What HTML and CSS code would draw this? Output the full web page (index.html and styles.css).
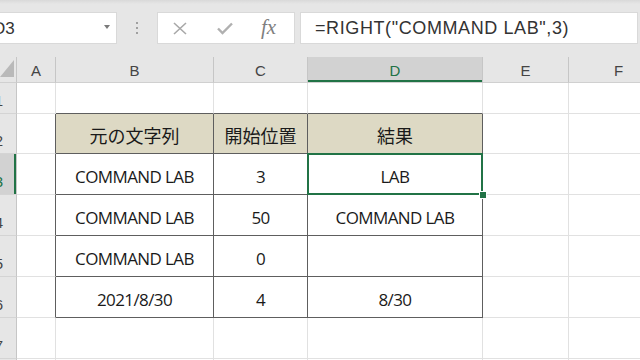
FILE: index.html
```html
<!DOCTYPE html>
<html lang="ja">
<head>
    <meta charset="UTF-8">
    <meta name="viewport" content="width=device-width, initial-scale=1.0">
    <title>RIGHT関数 - COMMAND LAB</title>
    <link rel="stylesheet" href="styles.css">
</head>
<body>
    <div class="toolbar">
        <div class="name-box">
            <span class="name-text">D3</span>
            <span class="name-arrow"></span>
        </div>
        <div class="grip">
            <span></span><span></span><span></span>
        </div>
        <div class="fx-buttons">
            <svg class="icon-cancel" width="14" height="13" viewBox="0 0 14 13">
                <path d="M1 1 L13 12 M13 1 L1 12" stroke="#a8a8a8" stroke-width="1.6" fill="none"/>
            </svg>
            <svg class="icon-enter" width="16" height="13" viewBox="0 0 16 13">
                <path d="M1 6.5 L5.5 11 L15 1.5" stroke="#b0b0b0" stroke-width="2.4" fill="none"/>
            </svg>
            <span class="icon-fx">fx</span>
        </div>
        <div class="formula">=RIGHT("COMMAND LAB",3)</div>
    </div>

    <div class="sheet">
        <!-- column headers -->
        <div class="corner">
            <svg width="17" height="26" viewBox="0 0 17 26">
                <polygon points="14,3 14,20 0,20" fill="#b9b9b9"/>
            </svg>
        </div>
        <div class="ch">A</div>
        <div class="ch">B</div>
        <div class="ch">C</div>
        <div class="ch ch-active">D</div>
        <div class="ch">E</div>
        <div class="ch">F</div>

        <!-- row 1 -->
        <div class="rh"><span>1</span></div>
        <div class="c"></div>
        <div class="c edge-b"></div>
        <div class="c edge-b"></div>
        <div class="c edge-b"></div>
        <div class="c"></div>
        <div class="c"></div>

        <!-- row 2 -->
        <div class="rh"><span>2</span></div>
        <div class="c edge-r"></div>
        <div class="c t head">元の文字列</div>
        <div class="c t head">開始位置</div>
        <div class="c t head">結果</div>
        <div class="c"></div>
        <div class="c"></div>

        <!-- row 3 -->
        <div class="rh rh-active"><span>3</span></div>
        <div class="c edge-r"></div>
        <div class="c t">COMMAND LAB</div>
        <div class="c t">3</div>
        <div class="c t selected">LAB<span class="fill-handle"></span></div>
        <div class="c"></div>
        <div class="c"></div>

        <!-- row 4 -->
        <div class="rh"><span>4</span></div>
        <div class="c edge-r"></div>
        <div class="c t">COMMAND LAB</div>
        <div class="c t">50</div>
        <div class="c t">COMMAND LAB</div>
        <div class="c"></div>
        <div class="c"></div>

        <!-- row 5 -->
        <div class="rh"><span>5</span></div>
        <div class="c edge-r"></div>
        <div class="c t">COMMAND LAB</div>
        <div class="c t">0</div>
        <div class="c t"></div>
        <div class="c"></div>
        <div class="c"></div>

        <!-- row 6 -->
        <div class="rh"><span>6</span></div>
        <div class="c edge-r"></div>
        <div class="c t">2021/8/30</div>
        <div class="c t">4</div>
        <div class="c t">8/30</div>
        <div class="c"></div>
        <div class="c"></div>

        <!-- row 7 -->
        <div class="rh"><span>7</span></div>
        <div class="c"></div>
        <div class="c"></div>
        <div class="c"></div>
        <div class="c"></div>
        <div class="c"></div>
        <div class="c"></div>

        <!-- row 8 -->
        <div class="rh"><span>8</span></div>
        <div class="c"></div>
        <div class="c"></div>
        <div class="c"></div>
        <div class="c"></div>
        <div class="c"></div>
        <div class="c"></div>
    </div>
</body>
</html>
```

FILE: styles.css
```css
* {
    box-sizing: border-box;
}
body {
    margin: 0;
    width: 640px;
    height: 360px;
    overflow: hidden;
    background-color: #e6e6e6;
    font-family: "Liberation Sans", Arial, sans-serif;
}
.toolbar {
    height: 57px;
    display: flex;
    align-items: flex-start;
    padding-top: 12px;
    background: linear-gradient(#d9d9d9 0, #e6e6e6 4px);
}
.name-box {
    width: 129px;
    height: 32px;
    margin-left: -12px;
    padding-left: 4px;
    background: white;
    border: 1px solid #d9d9d9;
    display: flex;
    align-items: center;
    justify-content: space-between;
    padding-right: 6px;
}
.name-text {
    font-size: 17px;
    color: #333;
    margin-top: 1px;
}
.name-arrow {
    width: 0;
    height: 0;
    border-left: 3.5px solid transparent;
    border-right: 3.5px solid transparent;
    border-top: 4px solid #7a7a7a;
    margin-top: -3px;
}
.grip {
    width: 40px;
    height: 32px;
    display: flex;
    flex-direction: column;
    align-items: center;
    justify-content: center;
    gap: 3px;
}
.grip span {
    width: 2px;
    height: 2px;
    background: #a0a0a0;
}
.fx-buttons {
    width: 138px;
    height: 32px;
    background: white;
    border: 1px solid #d9d9d9;
    display: flex;
    align-items: center;
    padding-left: 15px;
}
.icon-cancel {
    margin-top: 1px;
}
.icon-enter {
    margin-left: 30px;
    margin-top: 1px;
}
.icon-fx {
    margin-left: 28px;
    font-family: "Liberation Serif", "Times New Roman", serif;
    font-style: italic;
    font-size: 21px;
    color: #7f7f7f;
    margin-top: -2px;
}
.formula {
    flex: 1;
    height: 32px;
    margin-left: 5px;
    margin-right: 2px;
    background: white;
    border: 1px solid #d9d9d9;
    padding-left: 14px;
    font-size: 18px;
    letter-spacing: 0.6px;
    color: #333;
    line-height: 30px;
}
.sheet {
    display: grid;
    grid-template-columns: 17px 39px 158px 94px 175px 86px 100px;
    grid-template-rows: 26px 31px 40px repeat(6, 41px);
    width: 669px;
    background: white;
}
.sheet > div {
    border-right: 1px solid #e1e1e1;
    border-bottom: 1px solid #e1e1e1;
}
.sheet > .corner {
    background: #e6e6e6;
    border-right: 1px solid #c6c6c6;
    border-bottom: 1px solid #d0d0d0;
}
.corner svg {
    display: block;
}
.sheet > .ch {
    background: #e6e6e6;
    border-right: 1px solid #c6c6c6;
    border-bottom: 1px solid #d0d0d0;
    display: flex;
    align-items: center;
    justify-content: center;
    font-size: 15px;
    color: #444;
    padding-top: 1px;
}
.sheet > .ch-active {
    background: #d2d2d2;
    color: #217346;
    box-shadow: inset 0 -2px 0 #217346;
}
.sheet > .rh {
    background: #e6e6e6;
    border-right: 1px solid #c6c6c6;
    border-bottom: 1px solid #d4d4d4;
    display: flex;
    align-items: flex-end;
    justify-content: flex-end;
    padding-right: 13px;
    padding-bottom: 4px;
    font-size: 15px;
    color: #444;
}
.sheet > .rh-active {
    background: #d2d2d2;
    color: #217346;
    box-shadow: inset -2px 0 0 #217346;
}
.sheet > .edge-r {
    border-right-color: #5e5e5e;
}
.sheet > .edge-b {
    border-bottom-color: #5e5e5e;
}
.sheet > .t {
    border-right-color: #5e5e5e;
    border-bottom-color: #5e5e5e;
    display: flex;
    align-items: center;
    justify-content: center;
    padding-top: 4px;
    font-family: "Open Sans", "Noto Sans CJK JP", sans-serif;
    font-size: 17px;
    letter-spacing: -0.6px;
    color: #1a1a1a;
}
.sheet > .head {
    background: #ddd9c4;
    font-family: "Noto Sans CJK JP", sans-serif;
    font-size: 18px;
    letter-spacing: 0;
    padding-top: 3px;
}
.selected {
    position: relative;
}
.selected::after {
    content: "";
    position: absolute;
    top: -1px;
    left: -1px;
    right: -1px;
    bottom: -1px;
    border: 2px solid #217346;
}
.fill-handle {
    position: absolute;
    right: -5px;
    bottom: -5px;
    width: 8px;
    height: 8px;
    background: #217346;
    border: 1px solid white;
    z-index: 1;
}
```
